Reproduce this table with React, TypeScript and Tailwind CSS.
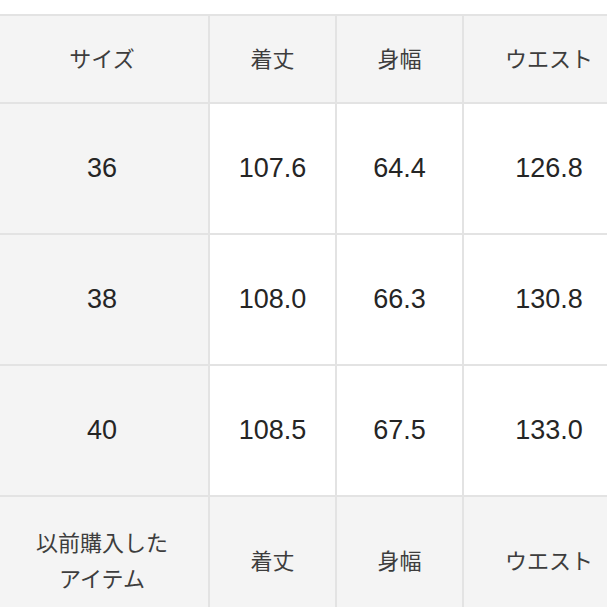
const header = ["サイズ", "着丈", "身幅", "ウエスト"];

const rows = [
  ["36", "107.6", "64.4", "126.8"],
  ["38", "108.0", "66.3", "130.8"],
  ["40", "108.5", "67.5", "133.0"],
];

const font = { fontFamily: '"Liberation Sans", "Noto Sans CJK JP", sans-serif' };

export default function App() {
  return (
    <div className="w-[607px] h-[607px] overflow-hidden bg-white pt-[14px]" style={font}>
      <div className="grid w-[634px] grid-cols-[208px_125px_125px_170px] grid-rows-[86px_129px_129px_129px_129px] gap-[2px] bg-[#e3e3e3] pt-[2px]">
        {header.map((h, i) => (
          <div
            key={h}
            className={
              "flex items-center justify-center bg-[#f4f4f4] text-[22px] text-[#3d3d3d] " +
              (i === 0 ? "pr-[4px]" : "")
            }
          >
            {h}
          </div>
        ))}
        {rows.map((r) =>
          r.map((v, i) => (
            <div
              key={r[0] + i}
              className={
                "flex items-center justify-center text-[27px] text-[#252525] " +
                (i === 0 ? "bg-[#f4f4f4] pr-[4px]" : "bg-white")
              }
            >
              {v}
            </div>
          ))
        )}
        <div className="flex items-center justify-center bg-[#f4f4f4] pr-[4px] text-center text-[22px] leading-[36px] text-[#3d3d3d]">
          以前購入した
          <br />
          アイテム
        </div>
        {header.slice(1).map((h) => (
          <div
            key={"b" + h}
            className="flex items-center justify-center bg-[#f4f4f4] text-[22px] text-[#3d3d3d]"
          >
            {h}
          </div>
        ))}
      </div>
    </div>
  );
}
